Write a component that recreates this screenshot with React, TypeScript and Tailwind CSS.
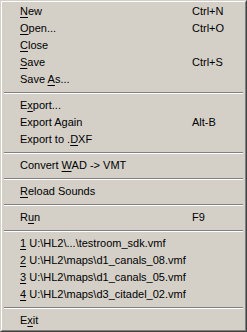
type Item =
  | { sep: true }
  | { sep?: false; label: string; u?: number; shortcut?: string };

const items: Item[] = [
  { label: "New", u: 0, shortcut: "Ctrl+N" },
  { label: "Open...", u: 0, shortcut: "Ctrl+O" },
  { label: "Close", u: 0 },
  { label: "Save", u: 0, shortcut: "Ctrl+S" },
  { label: "Save As...", u: 5 },
  { sep: true },
  { label: "Export...", u: 1 },
  { label: "Export Again", shortcut: "Alt-B" },
  { label: "Export to .DXF", u: 11 },
  { sep: true },
  { label: "Convert WAD -> VMT", u: 8 },
  { sep: true },
  { label: "Reload Sounds", u: 0 },
  { sep: true },
  { label: "Run", u: 1, shortcut: "F9" },
  { sep: true },
  { label: "1 U:\\HL2\\...\\testroom_sdk.vmf", u: 0 },
  { label: "2 U:\\HL2\\maps\\d1_canals_08.vmf", u: 0 },
  { label: "3 U:\\HL2\\maps\\d1_canals_05.vmf", u: 0 },
  { label: "4 U:\\HL2\\maps\\d3_citadel_02.vmf", u: 0 },
  { sep: true },
  { label: "Exit", u: 1 },
];

function Label({ text, u }: { text: string; u?: number }) {
  if (u === undefined) return <span>{text}</span>;
  return (
    <span>
      {text.slice(0, u)}
      <u className="underline-offset-[2px]">{text[u]}</u>
      {text.slice(u + 1)}
    </span>
  );
}

export default function App() {
  return (
    <div
      className="w-[247px] h-[332px] bg-[#d4d0c8] border border-t-[#d4d0c8] border-l-[#d4d0c8] border-r-[#404040] border-b-[#404040] text-[11px] text-black"
      style={{ fontFamily: '"Liberation Sans", Arial, sans-serif' }}
    >
      <div className="h-full border border-t-white border-l-white border-r-[#808080] border-b-[#808080] p-px flex flex-col">
        {items.map((it, i) =>
          it.sep ? (
            <div key={i} className="h-[9px] flex items-start pt-[4px] px-px">
              <div className="w-full h-[2px] border-t border-t-[#808080] border-b border-b-white" />
            </div>
          ) : (
            <div key={i} className="h-[17px] grid grid-cols-[172px_1fr] items-center pl-[17px] whitespace-nowrap leading-none">
              <Label text={it.label} u={it.u} />
              <span>{it.shortcut}</span>
            </div>
          )
        )}
      </div>
    </div>
  );
}
